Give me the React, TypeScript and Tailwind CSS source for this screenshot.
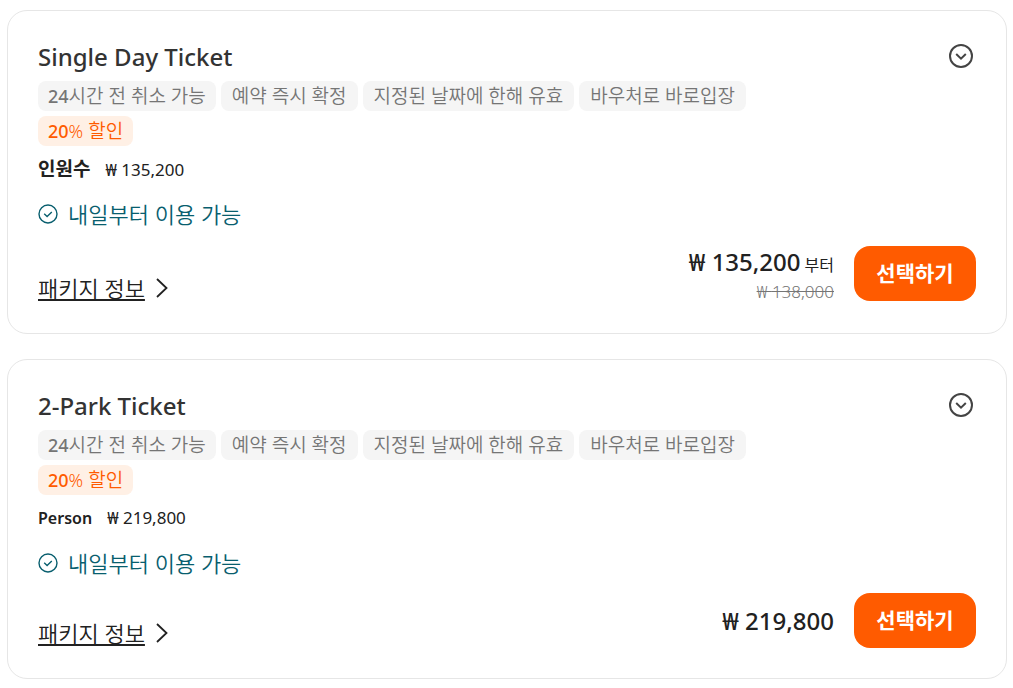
import { useState } from 'react';

interface Ticket {
  id: string;
  title: string;
  unit: string;
  korean: boolean;
  price: string;
  original?: string;
}

const TICKETS: Ticket[] = [
  { id: 'single', title: 'Single Day Ticket', unit: '인원수', korean: true, price: '135,200', original: '138,000' },
  { id: 'two-park', title: '2-Park Ticket', unit: 'Person', korean: false, price: '219,800' },
];

const TAGS = [
  { num: '24', text: '시간 전 취소 가능' },
  { text: '예약 즉시 확정' },
  { text: '지정된 날짜에 한해 유효' },
  { text: '바우처로 바로입장' },
];

function CheckCircle() {
  return (
    <svg className="size-5 shrink-0" viewBox="0 0 20 20" fill="none" stroke="currentColor" strokeWidth="1.4" aria-hidden="true">
      <circle cx="10" cy="10" r="9" />
      <path d="M6.2 9.8l2.9 2.7 4.7-4.4" />
    </svg>
  );
}

function ChevronCircle() {
  return (
    <svg className="size-6" viewBox="0 0 24 24" fill="none" stroke="currentColor" strokeWidth="2" aria-hidden="true">
      <circle cx="12" cy="12" r="11" />
      <path d="M7.2 10l4.8 4.6 4.8-4.6" />
    </svg>
  );
}

function TicketCard({ ticket }: { ticket: Ticket }) {
  const [open, setOpen] = useState(false);

  return (
    <article className="rounded-[20px] border border-[#e6e6e6] bg-white p-[30px]">
      <header className="flex items-start justify-between pr-[3px]">
        <h2 className="text-2xl font-medium text-[#333]">{ticket.title}</h2>
        <button
          type="button"
          aria-label={`${ticket.title} 상세`}
          aria-expanded={open}
          onClick={() => setOpen(!open)}
          className="cursor-pointer pt-[3px] text-[#444]"
        >
          <ChevronCircle />
        </button>
      </header>

      <ul className="mt-2 flex flex-wrap gap-[5px] text-[19px] leading-[30px] font-[350] text-[#757575]">
        {TAGS.map((tag) => (
          <li key={tag.text} className={`rounded-lg bg-[#f5f5f5] ${tag.num ? 'px-[10px]' : 'px-[11px]'}`}>
            {tag.num && <span className="text-lg leading-[30px] font-medium">{tag.num}</span>}
            {tag.text}
          </li>
        ))}
      </ul>
      <p className="mt-[5px] w-fit rounded-lg bg-[#fff0e5] px-[10px] text-[19px] leading-[30px] font-[350] text-[#ff5b00]">
        <span className="text-lg leading-[30px]">
          <span className="font-medium">20</span>%
        </span>{' '}
        할인
      </p>

      <p className="mt-[11px] flex h-6 items-baseline gap-[15px] text-[17px] leading-6 text-[#212121]">
        <span className={ticket.korean ? 'text-[19px] leading-6 font-semibold' : 'text-base font-semibold'}>{ticket.unit}</span>
        <span>₩ {ticket.price}</span>
      </p>

      <p className="mt-[21px] flex h-6 items-center gap-[10px] text-[22px] leading-6 font-[350] text-[#085e6e]">
        <CheckCircle />
        내일부터 이용 가능
      </p>

      <div className="mt-[18px] flex items-end justify-between">
        <a href="#package" className="flex h-[30px] items-center gap-[11px] text-[22px] leading-7 font-[350] text-[#212121]">
          <span className="underline decoration-2 underline-offset-2">패키지 정보</span>
          <svg className="h-5 w-3" viewBox="0 0 12 20" fill="none" stroke="currentColor" strokeWidth="1.8" aria-hidden="true">
            <path d="M1 1l9.5 9L1 19" />
          </svg>
        </a>
        <div className="flex items-center gap-5">
          <div className="text-right">
            <p className="text-2xl leading-9 font-medium text-[#212121]">
              ₩ {ticket.price}
              {ticket.original && <span className="ml-1 text-base font-normal">부터</span>}
            </p>
            {ticket.original && <del className="block text-[17px] leading-[23px] font-[350] text-[#757575]">₩ {ticket.original}</del>}
          </div>
          <button type="button" className="h-[55px] min-w-[122px] cursor-pointer rounded-2xl bg-[#ff5b00] px-5 text-[21px] font-bold text-white">
            선택하기
          </button>
        </div>
      </div>
    </article>
  );
}

export default function App() {
  return (
    <main className="flex min-h-screen flex-col gap-[25px] bg-white pt-[10px] pr-[6px] pb-2 pl-[7px] font-['Noto_Sans','Noto_Sans_CJK_KR',sans-serif]">
      {TICKETS.map((ticket) => (
        <TicketCard key={ticket.id} ticket={ticket} />
      ))}
    </main>
  );
}
